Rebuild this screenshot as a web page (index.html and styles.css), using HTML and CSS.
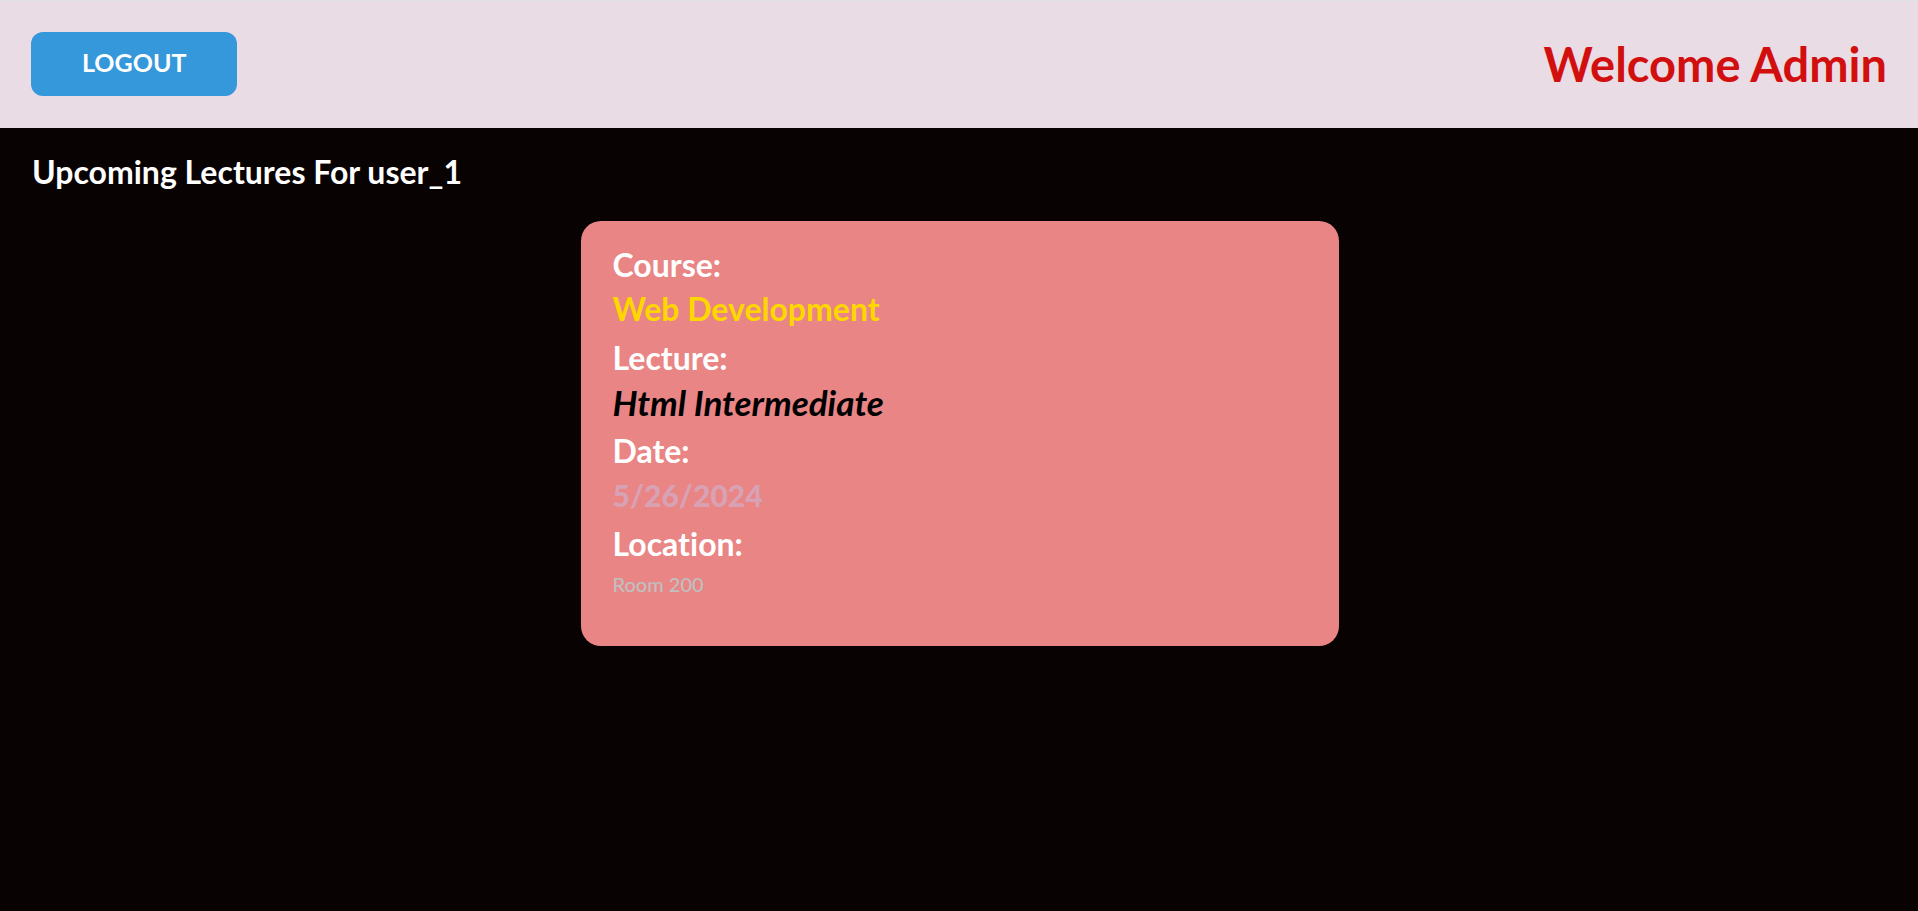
FILE: index.html
```html
<!DOCTYPE html>
<html lang="en">
<head>
<meta charset="utf-8">
<meta name="viewport" content="width=device-width, initial-scale=1">
<title>Upcoming Lectures</title>
<link rel="stylesheet" href="styles.css">
</head>
<body>
<header class="topbar">
  <button class="logout" type="button">LOGOUT</button>
  <h1 class="welcome">Welcome Admin</h1>
</header>
<main class="content">
  <h2 class="heading">Upcoming Lectures For user_1</h2>
  <article class="card">
    <dl class="details">
      <dt class="label">Course:</dt>
      <dd class="value course">Web Development</dd>
      <dt class="label">Lecture:</dt>
      <dd class="value lecture">Html Intermediate</dd>
      <dt class="label">Date:</dt>
      <dd class="value date">5/26/2024</dd>
      <dt class="label">Location:</dt>
      <dd class="value location">Room 200</dd>
    </dl>
  </article>
</main>
</body>
</html>
```

FILE: styles.css
```css
* {
  box-sizing: border-box;
  margin: 0;
}

body {
  min-height: 100vh;
  background: #080202;
  color: #fff;
  font-family: Lato, "Open Sans", sans-serif;
  font-weight: 700;
  font-variant-ligatures: none;
}

.topbar {
  display: flex;
  align-items: center;
  justify-content: space-between;
  padding: 31px 31px 32px;
  border-top: 1px solid #e0e0e0;
  background: #e9dce5;
}

.logout {
  padding: 16px 51px 20px;
  border: 0;
  border-radius: 12px;
  background: #3498db;
  color: #fff;
  font: inherit;
  font-size: 25px;
  line-height: 28px;
  cursor: pointer;
}

.welcome {
  color: #d20f0f;
  font-size: 47px;
  line-height: 64px;
}

.content {
  padding: 24px 31px 24px 32px;
}

.heading {
  margin-bottom: 29px;
  font-size: 32px;
  line-height: 40px;
}

.card {
  max-width: 758px;
  margin: 0 auto;
  padding: 24px 32px 28px;
  border-radius: 20px;
  background: #e98585;
}

.label,
.value {
  font-size: 32px;
  line-height: 40px;
}

.value {
  margin: 4px 0 9px;
}

.course {
  color: #ffd700;
}

.lecture {
  color: #000;
  font-size: 35px;
  font-style: italic;
}

.date {
  color: #d8a2b4;
  font-size: 30px;
  font-weight: 900;
}

.location {
  margin-bottom: 18px;
  color: #c0c0c0;
  font-size: 20px;
  font-weight: 500;
  line-height: 32px;
}
```
